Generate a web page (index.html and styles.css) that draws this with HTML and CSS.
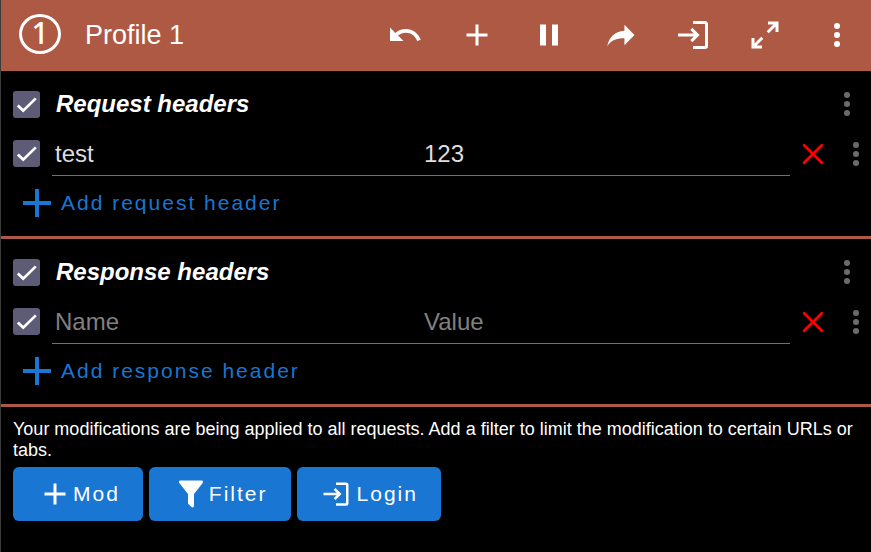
FILE: index.html
```html
<!DOCTYPE html>
<html lang="en">
<head>
    <meta charset="UTF-8">
    <meta name="viewport" content="width=device-width, initial-scale=1.0">
    <title>Profile 1</title>
    <link rel="stylesheet" href="styles.css">
</head>
<body>
    <!-- Shared icons -->
    <svg class="sprite" aria-hidden="true">
        <symbol id="plus" viewBox="0 0 24 24"><path d="M19 13h-6v6h-2v-6H5v-2h6V5h2v6h6z"/></symbol>
        <symbol id="dots" viewBox="0 0 24 24"><circle cx="12" cy="6" r="2"/><circle cx="12" cy="12" r="2"/><circle cx="12" cy="18" r="2"/></symbol>
        <symbol id="close" viewBox="0 0 24 24"><path d="M6.1 6.1l11.8 11.8M17.9 6.1L6.1 17.9" fill="none" stroke="currentColor" stroke-width="1.9" stroke-linecap="round"/></symbol>
        <symbol id="login" viewBox="0 0 24 24"><path d="M2 12h13M10.9 7.9L15 12l-4.1 4.1M12 3.7h8a1 1 0 0 1 1 1v14.6a1 1 0 0 1-1 1h-8" fill="none" stroke="currentColor" stroke-width="2"/></symbol>
    </svg>

    <header class="toolbar">
        <span class="badge">1</span>
        <h1>Profile 1</h1>
        <div class="actions">
            <button type="button" aria-label="Undo"><svg class="icon" viewBox="0 0 24 24"><path d="M12.5,8C9.85,8 7.45,9 5.6,10.6L2,7V16H11L7.38,12.38C8.77,11.22 10.54,10.5 12.5,10.5C16.04,10.5 19.05,12.81 20.1,16L22.47,15.22C21.08,11.03 17.15,8 12.5,8Z"/></svg></button>
            <button type="button" aria-label="Add"><svg class="icon"><use href="#plus"/></svg></button>
            <button type="button" aria-label="Pause"><svg class="icon" viewBox="0 0 24 24"><path d="M6 19h4V5H6zM14 5v14h4V5z"/></svg></button>
            <button type="button" aria-label="Share"><svg class="icon" viewBox="0 0 24 24"><path d="M21 12l-6.7-6.8v3.9C7.5 9.8 4 13.5 2.8 19.5c2.5-4 6-5.3 11.5-5.3v4.6z"/></svg></button>
            <button type="button" aria-label="Login"><svg class="icon"><use href="#login"/></svg></button>
            <button type="button" aria-label="Expand"><svg class="icon" viewBox="0 0 24 24"><path d="M10,21V19H6.41L10.91,14.5L9.5,13.09L5,17.59V14H3V21H10M14.5,10.91L19,6.41V10H21V3H14V5H17.59L13.09,9.5L14.5,10.91Z"/></svg></button>
            <button type="button" aria-label="More"><svg class="icon"><use href="#dots"/></svg></button>
        </div>
    </header>

    <!-- Request headers -->
    <section class="group">
        <div class="group-title">
            <input type="checkbox" class="check" id="requestAll" checked>
            <label for="requestAll">Request headers</label>
            <button type="button" class="menu" aria-label="Request headers menu"><svg class="icon"><use href="#dots"/></svg></button>
        </div>
        <div class="entry">
            <input type="checkbox" class="check" aria-label="Enable header" checked>
            <div class="fields">
                <input type="text" value="test" placeholder="Name" aria-label="Name">
                <input type="text" value="123" placeholder="Value" aria-label="Value">
            </div>
            <button type="button" class="remove" aria-label="Remove"><svg class="icon"><use href="#close"/></svg></button>
            <button type="button" class="menu" aria-label="Header menu"><svg class="icon"><use href="#dots"/></svg></button>
        </div>
        <button type="button" class="add"><svg class="icon-large"><use href="#plus"/></svg>Add request header</button>
    </section>

    <!-- Response headers -->
    <section class="group">
        <div class="group-title">
            <input type="checkbox" class="check" id="responseAll" checked>
            <label for="responseAll">Response headers</label>
            <button type="button" class="menu" aria-label="Response headers menu"><svg class="icon"><use href="#dots"/></svg></button>
        </div>
        <div class="entry">
            <input type="checkbox" class="check" aria-label="Enable header" checked>
            <div class="fields">
                <input type="text" placeholder="Name" aria-label="Name">
                <input type="text" placeholder="Value" aria-label="Value">
            </div>
            <button type="button" class="remove" aria-label="Remove"><svg class="icon"><use href="#close"/></svg></button>
            <button type="button" class="menu" aria-label="Header menu"><svg class="icon"><use href="#dots"/></svg></button>
        </div>
        <button type="button" class="add"><svg class="icon-large"><use href="#plus"/></svg>Add response header</button>
    </section>

    <footer class="bottom">
        <p>Your modifications are being applied to all requests. Add a filter to limit the modification to certain URLs or tabs.</p>
        <div class="buttons">
            <button type="button" class="btn"><svg class="icon"><use href="#plus"/></svg>Mod</button>
            <button type="button" class="btn"><svg class="icon" viewBox="0 0 24 24"><path d="M14,12V19.88C14.04,20.18 13.94,20.5 13.71,20.71C13.32,21.1 12.69,21.1 12.3,20.71L10.29,18.7C10.06,18.47 9.96,18.16 10,17.87V12H9.97L4.21,4.62C3.87,4.19 3.95,3.56 4.38,3.22C4.57,3.08 4.78,3 5,3H19C19.22,3 19.43,3.08 19.62,3.22C20.05,3.56 20.13,4.19 19.79,4.62L14.03,12H14Z"/></svg>Filter</button>
            <button type="button" class="btn"><svg class="icon-small"><use href="#login"/></svg>Login</button>
        </div>
    </footer>
</body>
</html>
```
FILE: styles.css
```css
* {
    box-sizing: border-box;
}
body {
    margin: 0;
    min-height: 100vh;
    border-left: 1px solid #3c3c3c;
    background-color: #000;
    color: #fff;
    font-family: "Liberation Sans", Arial, sans-serif;
}
button {
    display: flex;
    align-items: center;
    justify-content: center;
    padding: 0;
    border: none;
    background: none;
    color: inherit;
    font-family: inherit;
    cursor: pointer;
}
svg {
    display: block;
    flex: none;
    fill: currentColor;
}
.sprite {
    display: none;
}
.icon {
    width: 36px;
    height: 36px;
}
.icon-large {
    width: 48px;
    height: 48px;
}
.icon-small {
    width: 30px;
    height: 30px;
    margin-right: 6px;
}

/* Toolbar */
.toolbar {
    display: flex;
    align-items: center;
    height: 71px;
    padding: 0 4px 1px 18px;
    background-color: #ae5944;
}
.badge {
    display: flex;
    align-items: center;
    justify-content: center;
    width: 42px;
    height: 40px;
    margin: 0 24px 2px 0;
    padding-bottom: 2px;
    border: 3px solid #fff;
    border-radius: 50%;
    font-family: "Noto Sans", sans-serif;
    font-size: 30px;
    font-weight: 500;
    line-height: 30px;
}
h1 {
    margin: 0;
    font-size: 27px;
    font-weight: normal;
}
.actions {
    display: flex;
    gap: 12px;
    margin-left: auto;
}
.actions button {
    width: 60px;
    height: 48px;
}

/* Header groups */
.group {
    padding: 8px 0 6px 12px;
    border-bottom: 3px solid #ae5944;
}
.group-title {
    display: flex;
    align-items: center;
    height: 50px;
    padding-right: 9px;
}
.group-title label {
    flex: 1;
    padding-left: 16px;
    font-size: 24px;
    font-weight: bold;
    font-style: italic;
}
.check {
    appearance: none;
    flex: none;
    width: 27px;
    height: 27px;
    margin: 0;
    border-radius: 3px;
    background-color: #5d5b76;
}
.check:checked {
    background-image: url("data:image/svg+xml,%3Csvg xmlns='http://www.w3.org/2000/svg' viewBox='0 0 27 27'%3E%3Cpath d='M4.8 14.6l5.4 5L22.8 7.4' fill='none' stroke='%23fff' stroke-width='2.7'/%3E%3C/svg%3E");
}
.menu {
    width: 30px;
    height: 36px;
    color: #6b6b6b;
}
.entry {
    display: flex;
    align-items: center;
}
.fields {
    display: flex;
    flex: 1;
    margin-left: 12px;
    border-bottom: 1px solid #707070;
}
.fields input {
    flex: 1;
    min-width: 0;
    height: 46px;
    padding: 4px 3px 0;
    border: none;
    outline: none;
    background: none;
    color: #dedede;
    font-family: inherit;
    font-size: 24px;
}
.fields input::placeholder {
    color: #808080;
}
.remove {
    width: 46px;
    height: 36px;
    margin-right: 5px;
    color: #f00;
}
.entry .check,
.entry .remove,
.entry .menu {
    margin-top: 2px;
}
.add {
    height: 54px;
    color: #1976d2;
    font-size: 21px;
    letter-spacing: 2px;
}

/* Footer */
.bottom {
    padding: 12px;
}
.bottom p {
    margin: 0 0 6px;
    font-size: 18px;
    line-height: 21px;
}
.buttons {
    display: flex;
    flex-wrap: wrap;
    gap: 6px;
}
.btn {
    height: 54px;
    padding: 0 23px 0 24px;
    border-radius: 6px;
    background-color: #1976d2;
    font-size: 21px;
    letter-spacing: 2px;
}
```
